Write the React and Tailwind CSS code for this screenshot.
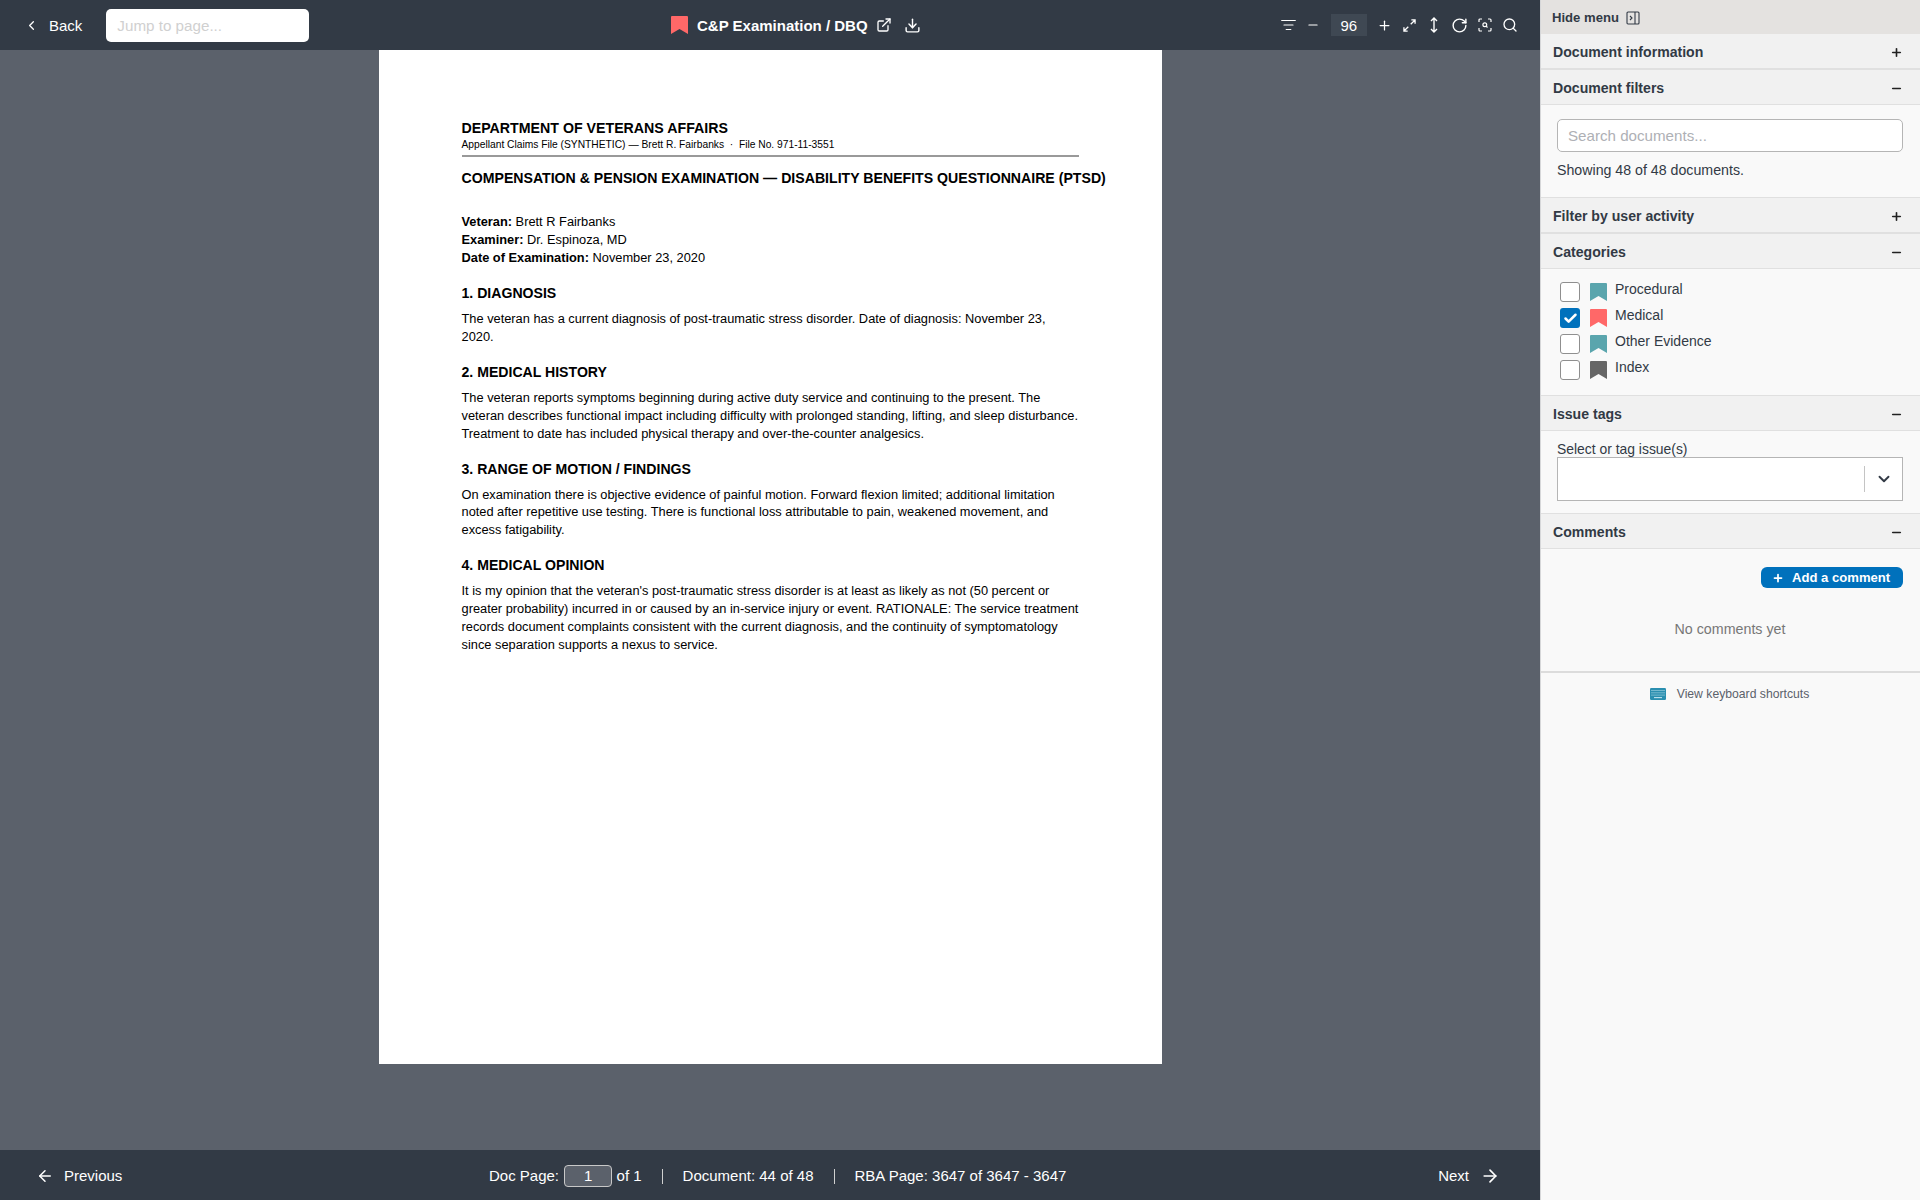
import React from "react";
import { ChevronLeft, ExternalLink, Download, Minus, Plus, RotateCw, Search, ArrowLeft, ArrowRight, ChevronDown, Check } from "lucide-react";

const Bookmark = ({ className }) => (
  <svg viewBox="0 0 17 18" className={className} fill="currentColor" aria-hidden="true">
    <path d="M0 1.2C0 .5.5 0 1.2 0h14.6c.7 0 1.2.5 1.2 1.2V18l-8.5-5L0 18z" />
  </svg>
);

const FilterLines = ({ className }) => (
  <svg viewBox="0 0 15 12" className={className} fill="none" stroke="currentColor" strokeWidth="1.2" strokeLinecap="round" aria-hidden="true">
    <path d="M.7 1.5h13.6M3 6h9M5.2 10.5h4.6" />
  </svg>
);

const Expand = ({ className }) => (
  <svg viewBox="0 0 14 14" className={className} fill="none" stroke="currentColor" strokeWidth="1.4" aria-hidden="true">
    <path d="M8.3 5.7 13 1M9 1h4v4M5.7 8.3 1 13M1 9v4h4" />
  </svg>
);

const VerticalFit = ({ className }) => (
  <svg viewBox="0 0 10 16" className={className} fill="none" stroke="currentColor" strokeWidth="1.4" aria-hidden="true">
    <path d="M5 1v14M2 4l3-3 3 3M2 12l3 3 3-3" />
  </svg>
);

const ScanIcon = ({ className }) => (
  <svg viewBox="0 0 14 14" className={className} fill="none" stroke="currentColor" strokeWidth="1.2" aria-hidden="true">
    <path d="M1 4V2a1 1 0 0 1 1-1h2M10 1h2a1 1 0 0 1 1 1v2M13 10v2a1 1 0 0 1-1 1h-2M4 13H2a1 1 0 0 1-1-1v-2" />
    <circle cx="6.8" cy="6.8" r="1.9" />
    <path d="m8.2 8.2 1.3 1.3" />
  </svg>
);

const HideIcon = ({ className }) => (
  <svg viewBox="0 0 14 14" className={className} fill="none" stroke="currentColor" strokeWidth="1.1" aria-hidden="true">
    <rect x="1" y="1" width="12" height="12" rx="1" />
    <path d="M9 1v12M4 5l2 2-2 2" />
  </svg>
);

const KeyboardFilled = ({ className }) => (
  <svg viewBox="0 0 16 12" className={className} aria-hidden="true">
    <rect width="16" height="12" rx="1.2" fill="#2b8fb0" />
    <path d="M1.5 2.5h13M1.5 4.8h13M1.5 7.1h13" stroke="#bfe3ee" strokeWidth="1" strokeDasharray="1 1" />
    <path d="M4 9.6h8" stroke="#bfe3ee" strokeWidth="1.1" />
  </svg>
);

const SectionHeader = ({ title, open }) => (
  <div className="box-border flex h-[34px] items-center justify-between bg-[#f1f1f1] pl-[12px] pr-[17px] pt-[3px]">
    <span className="text-[14.1px] font-bold text-[#323a45]">{title}</span>
    {open ? (
      <Minus className="h-[13px] w-[13px] text-[#212121]" strokeWidth={3} />
    ) : (
      <Plus className="h-[13px] w-[13px] text-[#212121]" strokeWidth={3} />
    )}
  </div>
);

const categories = [
  { name: "Procedural", color: "text-[#5aa5ad]", checked: false },
  { name: "Medical", color: "text-[#ff6868]", checked: true },
  { name: "Other Evidence", color: "text-[#5aa5ad]", checked: false },
  { name: "Index", color: "text-[#666666]", checked: false },
];

const Sidebar = () => (
  <aside className="flex h-full w-[380px] shrink-0 flex-col border-l border-[#d6d7d9] bg-[#f9f9f9] text-[#323a45]">
    <div className="box-border flex h-[33px] items-center gap-[7px] bg-[#e4e2e0] pl-[11px] pt-[2px]">
      <span className="text-[13.1px] font-bold">Hide menu</span>
      <HideIcon className="h-[14px] w-[14px]" />
    </div>
    <div className="border-t border-[#e4e2e0]">
      <SectionHeader title="Document information" />
    </div>
    <div className="border-t-2 border-[#e0e0e0]">
      <SectionHeader title="Document filters" open />
      <div className="box-border h-[93px] border-t border-[#e0e0e0] pl-[16px] pr-[17px] pt-[14px]">
        <div className="box-border flex h-[33px] items-center rounded-[5px] border border-[#b5b5b5] bg-white px-[10px] pt-[2px] text-[15.15px] text-[#aeb0b5]">
          Search documents...
        </div>
        <p className="mt-[9px] text-[14.2px] leading-[18px]">Showing 48 of 48 documents.</p>
      </div>
    </div>
    <div className="border-t border-[#e0e0e0]">
      <SectionHeader title="Filter by user activity" />
    </div>
    <div className="border-t-2 border-[#e0e0e0]">
      <SectionHeader title="Categories" open />
      <div className="box-border flex h-[127px] flex-col gap-[6px] border-t border-[#e0e0e0] pl-[19px] pt-[13px]">
        {categories.map((c) => (
          <div key={c.name} className="flex h-[20px] items-start">
            <span
              className={
                c.checked
                  ? "flex h-[20px] w-[20px] items-center justify-center rounded-[3px] bg-[#0071bc]"
                  : "h-[20px] w-[20px] rounded-[3px] border border-[#8f8f8f] bg-white"
              }
            >
              {c.checked && <Check className="h-[15px] w-[15px] text-white" strokeWidth={4} />}
            </span>
            <Bookmark className={`ml-[10px] mt-px h-[18px] w-[17px] ${c.color}`} />
            <span className="ml-[8px] -mt-[3px] text-[14px] leading-[20px]">{c.name}</span>
          </div>
        ))}
      </div>
    </div>
    <div className="border-t border-[#e0e0e0]">
      <SectionHeader title="Issue tags" open />
      <div className="box-border h-[83px] border-t border-[#e0e0e0] pl-[16px] pr-[17px] pt-[9px]">
        <p className="h-[17px] text-[13.9px] leading-[19px]">Select or tag issue(s)</p>
        <div className="flex h-[44px] items-center border border-[#b5b5b5] bg-white">
          <span className="ml-auto h-[26px] w-px bg-[#c4c4c4]" />
          <span className="flex w-[37px] justify-center">
            <ChevronDown className="h-[18px] w-[18px] text-[#323a45]" strokeWidth={2.5} />
          </span>
        </div>
      </div>
    </div>
    <div className="border-t border-[#e0e0e0]">
      <SectionHeader title="Comments" open />
      <div className="box-border h-[125px] border-b-2 border-t border-b-[#dcdcdc] border-t-[#e0e0e0] pl-[16px] pr-[17px] pt-[18px]">
        <div className="flex justify-end">
          <button className="flex h-[21px] w-[142px] items-center rounded-[6px] bg-[#0071bc] pl-[11px] text-[13.1px] font-bold text-white">
            <Plus className="h-[12px] w-[12px]" strokeWidth={3.5} />
            <span className="ml-[8px]">Add a comment</span>
          </button>
        </div>
        <p className="mt-[32px] text-center text-[14.25px] leading-[18px] text-[#777777]">No comments yet</p>
      </div>
    </div>
    <div className="mt-[14px] flex items-center justify-center gap-[11px] pr-[2px] text-[12.2px] leading-[14px] text-[#5b616b]">
      <KeyboardFilled className="h-[12px] w-[16px]" />
      <span>View keyboard shortcuts</span>
    </div>
  </aside>
);

const TopBar = () => (
  <header className="flex h-[50px] shrink-0 items-center bg-[#323a45] text-white">
    <div className="flex w-[671px] shrink-0 items-center">
      <ChevronLeft className="ml-[24px] h-[15px] w-[15px]" />
      <span className="ml-[10px] pt-[2px] text-[15px]">Back</span>
      <div className="ml-[24px] box-border flex h-[33px] w-[203px] items-center rounded-[5px] bg-white px-[11px] pt-[2px] text-[15.2px] text-[#d0d0d0]">
        Jump to page...
      </div>
    </div>
    <div className="flex items-center">
      <Bookmark className="h-[18px] w-[17px] text-[#ff6868]" />
      <span className="ml-[9px] pt-[2px] text-[15px] font-bold">C&amp;P Examination / DBQ</span>
      <ExternalLink className="ml-[8.5px] h-[16px] w-[16px]" />
      <Download className="ml-[12px] h-[17px] w-[17px]" />
    </div>
    <div className="ml-auto flex items-center pr-[22.5px]">
      <FilterLines className="h-[12px] w-[15px]" />
      <Minus className="ml-[10px] h-[14px] w-[14px]" />
      <span className="ml-[10.4px] box-border flex h-[22px] w-[36px] items-center justify-center bg-[#3f4853] pt-[2px] text-[15px]">96</span>
      <Plus className="ml-[10px] h-[15px] w-[15px]" />
      <Expand className="ml-[10.7px] h-[13px] w-[13px]" />
      <VerticalFit className="ml-[13px] h-[16px] w-[10px]" />
      <RotateCw className="ml-[12.5px] h-[17px] w-[17px]" />
      <ScanIcon className="ml-[10px] h-[14px] w-[14px]" />
      <Search className="ml-[9.5px] h-[16px] w-[16px]" />
    </div>
  </header>
);

const H2 = ({ children }) => <h2 className="mt-[17px] text-[14.1px] font-bold leading-[18px]">{children}</h2>;
const P = ({ children }) => <p className="mt-[8px] w-[618px] text-[12.82px] leading-[17.9px]">{children}</p>;

const DocPage = () => (
  <div className="mx-auto box-border h-[1014px] w-[783px] shrink-0 bg-white pl-[83px] pt-[70px] text-black">
    <h1 className="text-[14.2px] font-bold leading-[16px]">DEPARTMENT OF VETERANS AFFAIRS</h1>
    <p className="mt-[2px] text-[10.25px] leading-[14px]">Appellant Claims File (SYNTHETIC) — Brett R. Fairbanks &nbsp;·&nbsp; File No. 971-11-3551</p>
    <div className="mt-[3px] h-[2px] w-[617px] bg-[#999999]" />
    <h1 className="mt-[12px] whitespace-nowrap text-[14.13px] font-bold leading-[18px]">
      COMPENSATION &amp; PENSION EXAMINATION — DISABILITY BENEFITS QUESTIONNAIRE (PTSD)
    </h1>
    <div className="mt-[26px] text-[12.82px] leading-[18px]">
      <p><b>Veteran:</b> Brett R Fairbanks</p>
      <p><b>Examiner:</b> Dr. Espinoza, MD</p>
      <p><b>Date of Examination:</b> November 23, 2020</p>
    </div>
    <H2>1. DIAGNOSIS</H2>
    <P>The veteran has a current diagnosis of post-traumatic stress disorder. Date of diagnosis: November 23, 2020.</P>
    <H2>2. MEDICAL HISTORY</H2>
    <P>The veteran reports symptoms beginning during active duty service and continuing to the present. The veteran describes functional impact including difficulty with prolonged standing, lifting, and sleep disturbance. Treatment to date has included physical therapy and over-the-counter analgesics.</P>
    <H2>3. RANGE OF MOTION / FINDINGS</H2>
    <P>On examination there is objective evidence of painful motion. Forward flexion limited; additional limitation noted after repetitive use testing. There is functional loss attributable to pain, weakened movement, and excess fatigability.</P>
    <H2>4. MEDICAL OPINION</H2>
    <P>It is my opinion that the veteran's post-traumatic stress disorder is at least as likely as not (50 percent or greater probability) incurred in or caused by an in-service injury or event. RATIONALE: The service treatment records document complaints consistent with the current diagnosis, and the continuity of symptomatology since separation supports a nexus to service.</P>
  </div>
);

const BottomBar = () => (
  <footer className="box-border flex h-[50px] shrink-0 items-center bg-[#323a45] pt-[2px] text-[15px] text-white">
    <div className="flex w-[489px] shrink-0 items-center">
      <ArrowLeft className="ml-[36px] h-[18px] w-[18px]" />
      <span className="ml-[10px]">Previous</span>
    </div>
    <span>Doc Page:</span>
    <span className="ml-[5px] flex h-[22px] w-[48px] items-center justify-center rounded-[4px] border border-[#c8c8c8] bg-[#5b616b]">1</span>
    <span className="ml-[4.5px]">of 1</span>
    <span className="ml-[20px] h-[15px] w-px bg-[#d0d0d0]" />
    <span className="ml-[20px]">Document: 44 of 48</span>
    <span className="ml-[20px] h-[15px] w-px bg-[#d0d0d0]" />
    <span className="ml-[20px]">RBA Page: 3647 of 3647 - 3647</span>
    <div className="ml-auto flex items-center pr-[40px]">
      <span>Next</span>
      <ArrowRight className="ml-[11px] h-[20px] w-[20px]" />
    </div>
  </footer>
);

export default function App() {
  return (
    <div className="flex h-[1200px] w-[1920px] overflow-hidden font-['Liberation_Sans',sans-serif]">
      <main className="flex h-full w-[1540px] shrink-0 flex-col">
        <TopBar />
        <div className="flex-1 overflow-hidden bg-[#5b616b]">
          <DocPage />
        </div>
        <BottomBar />
      </main>
      <Sidebar />
    </div>
  );
}
